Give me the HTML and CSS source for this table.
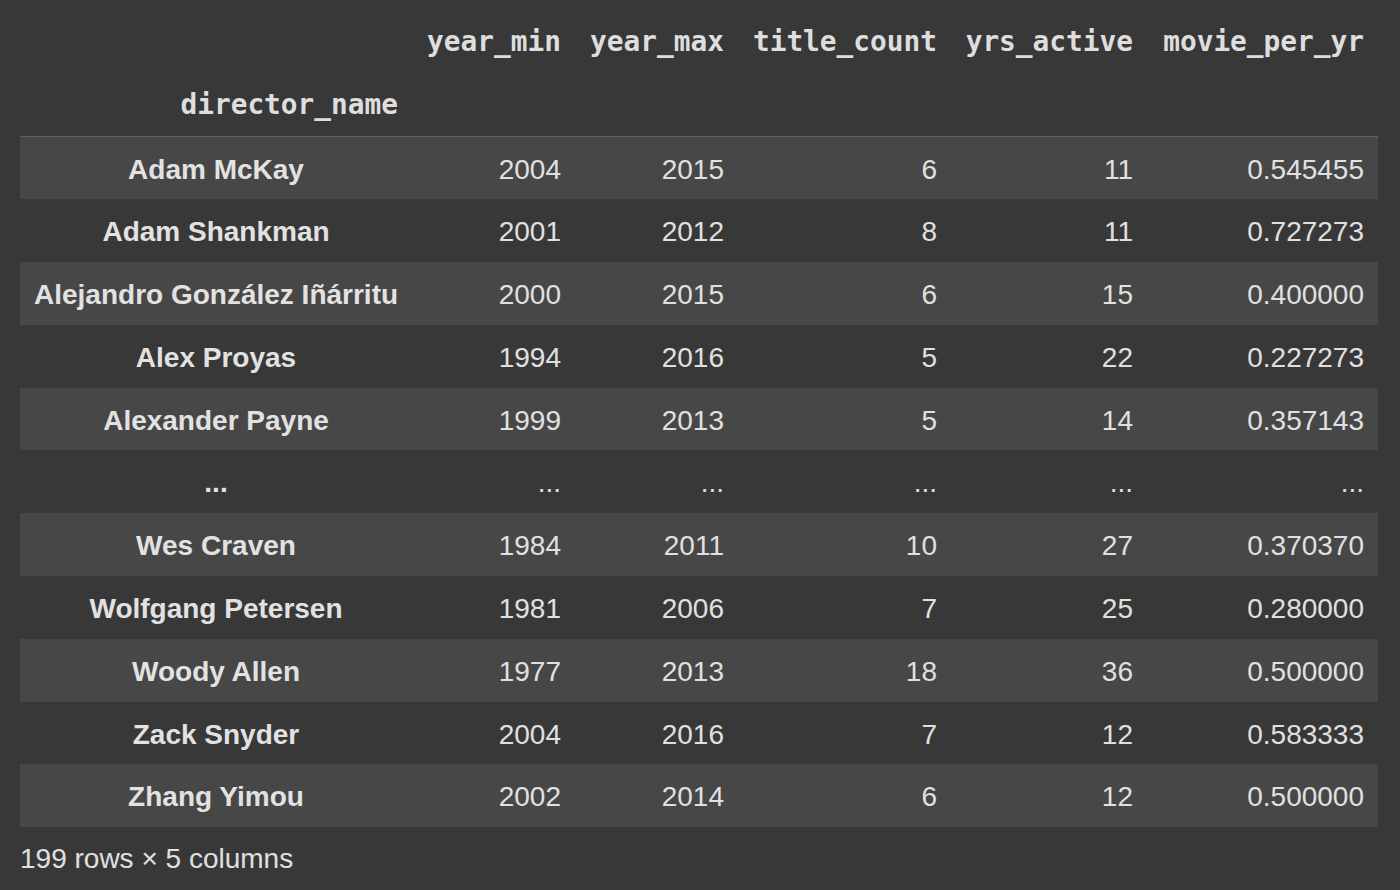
FILE: index.html
```html
<!DOCTYPE html>
<html>
<head>
<meta charset="utf-8">
<link rel="stylesheet" href="styles.css">
</head>
<body>
<div class="output">
<table class="dataframe">
  <colgroup>
    <col class="c-idx"><col class="c-ymin"><col class="c-ymax"><col class="c-tc"><col class="c-ya"><col class="c-mpy">
  </colgroup>
  <thead>
    <tr class="hdr"><th></th><th>year_min</th><th>year_max</th><th>title_count</th><th>yrs_active</th><th>movie_per_yr</th></tr>
    <tr class="hdr hdr-last"><th>director_name</th><th></th><th></th><th></th><th></th><th></th></tr>
  </thead>
  <tbody>
    <tr><th>Adam McKay</th><td>2004</td><td>2015</td><td>6</td><td>11</td><td>0.545455</td></tr>
    <tr><th>Adam Shankman</th><td>2001</td><td>2012</td><td>8</td><td>11</td><td>0.727273</td></tr>
    <tr><th>Alejandro González Iñárritu</th><td>2000</td><td>2015</td><td>6</td><td>15</td><td>0.400000</td></tr>
    <tr><th>Alex Proyas</th><td>1994</td><td>2016</td><td>5</td><td>22</td><td>0.227273</td></tr>
    <tr><th>Alexander Payne</th><td>1999</td><td>2013</td><td>5</td><td>14</td><td>0.357143</td></tr>
    <tr><th>...</th><td>...</td><td>...</td><td>...</td><td>...</td><td>...</td></tr>
    <tr><th>Wes Craven</th><td>1984</td><td>2011</td><td>10</td><td>27</td><td>0.370370</td></tr>
    <tr><th>Wolfgang Petersen</th><td>1981</td><td>2006</td><td>7</td><td>25</td><td>0.280000</td></tr>
    <tr><th>Woody Allen</th><td>1977</td><td>2013</td><td>18</td><td>36</td><td>0.500000</td></tr>
    <tr><th>Zack Snyder</th><td>2004</td><td>2016</td><td>7</td><td>12</td><td>0.583333</td></tr>
    <tr><th>Zhang Yimou</th><td>2002</td><td>2014</td><td>6</td><td>12</td><td>0.500000</td></tr>
  </tbody>
</table>
<p class="shape">199 rows × 5 columns</p>
</div>
</body>
</html>
```

FILE: styles.css
```css
html, body {
  margin: 0;
  padding: 0;
  background: #383838;
}
body {
  width: 1400px;
  height: 890px;
  overflow: hidden;
  font-family: "Liberation Sans", Arial, sans-serif;
  color: #e0e0e0;
}
.output {
  padding: 10px 0 0 20px;
}
.dataframe {
  border-collapse: collapse;
  border-spacing: 0;
  table-layout: fixed;
  width: 1358px;
  font-size: 28px;
}
.c-idx { width: 392px; }
.c-ymin { width: 163px; }
.c-ymax { width: 163px; }
.c-tc { width: 213px; }
.c-ya { width: 196px; }
.c-mpy { width: 231px; }

.dataframe th,
.dataframe td {
  padding: 0 14px;
  white-space: nowrap;
  line-height: 32px;
}
.dataframe thead th {
  font-family: "DejaVu Sans Mono", "Liberation Mono", monospace;
  font-weight: bold;
  font-size: 27.8px;
  text-align: right;
  color: #dedede;
  height: 63px;
}
.dataframe thead tr.hdr-last th {
  border-bottom: 1px solid #616161;
}
.dataframe tbody tr {
  height: 62.8px;
}
.dataframe tbody th,
.dataframe tbody td {
  padding-top: 3px;
}
.dataframe tbody tr:nth-child(odd) {
  background: #474747;
}
.dataframe tbody th {
  font-weight: bold;
  text-align: center;
  color: #e2e2e2;
}
.dataframe tbody td {
  text-align: right;
  font-weight: normal;
  color: #e0e0e0;
}
.shape {
  margin: 0;
  padding-top: 16px;
  font-size: 28px;
  line-height: 32px;
  color: #e0e0e0;
}
```
